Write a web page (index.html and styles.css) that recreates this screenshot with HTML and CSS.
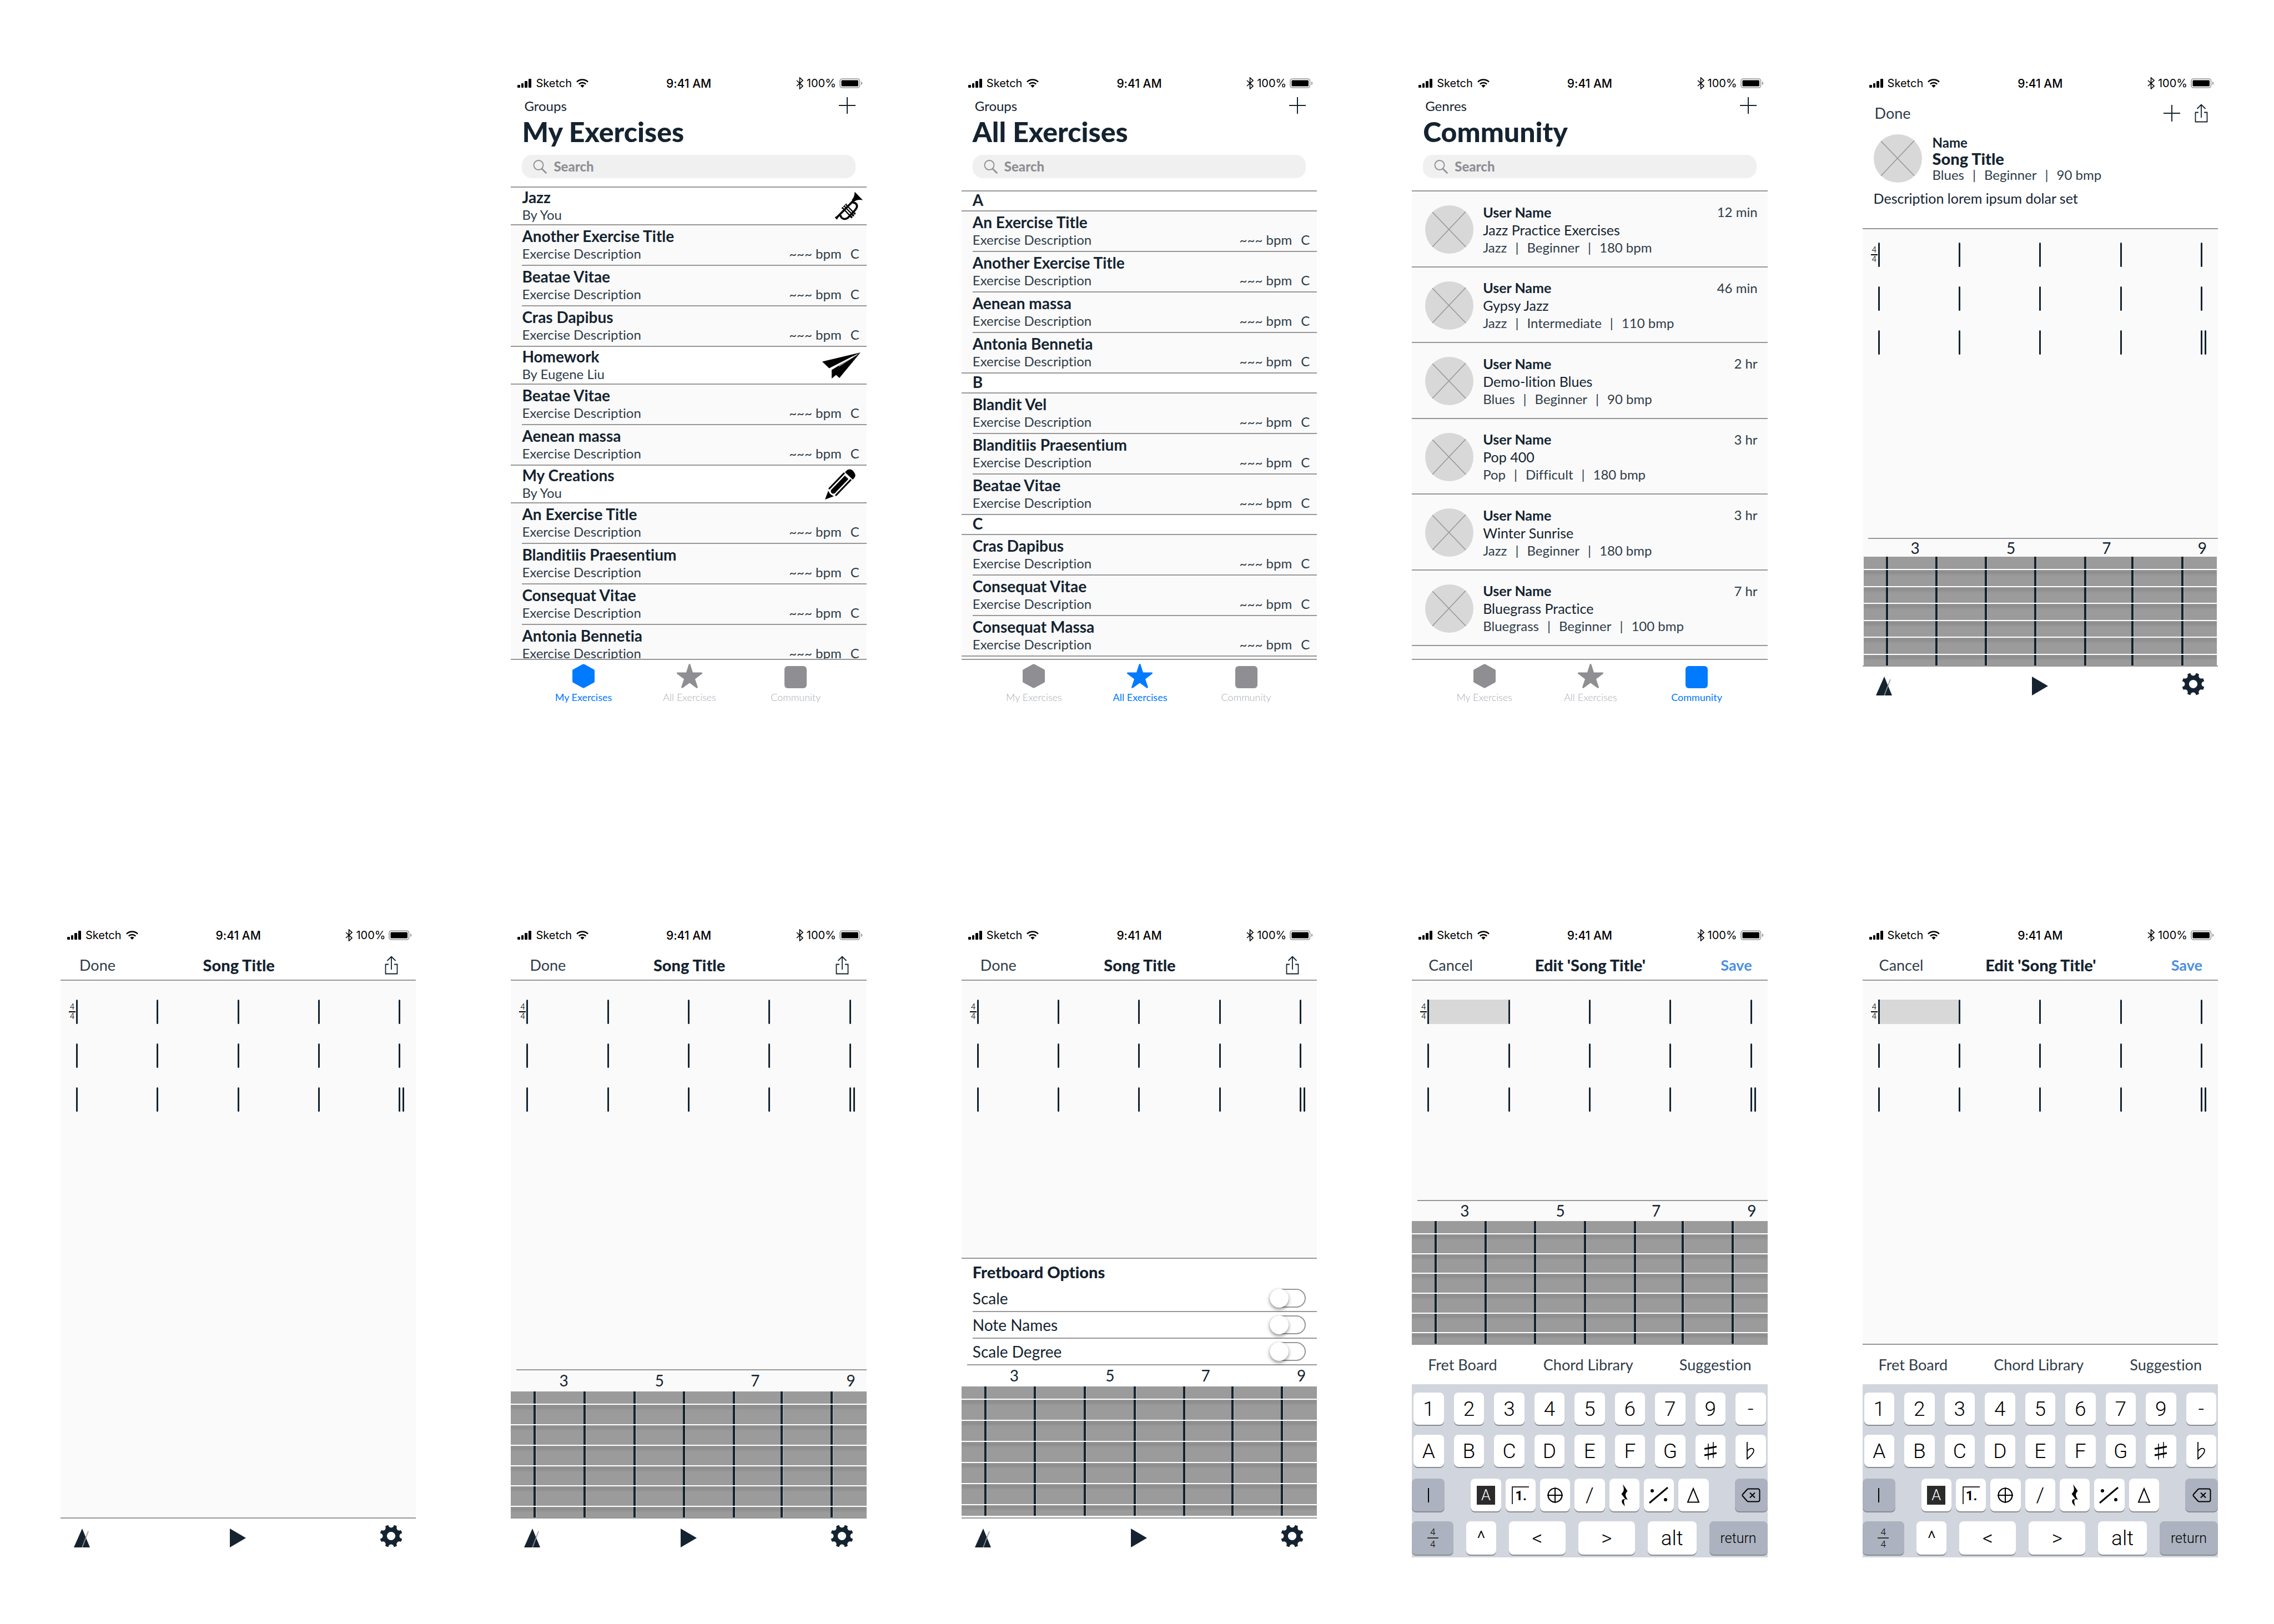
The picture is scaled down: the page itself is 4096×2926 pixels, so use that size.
FILE: index.html
```html
<!DOCTYPE html>
<html lang="en">
<head>
<meta charset="utf-8">
<meta name="viewport" content="width=device-width, initial-scale=1">
<title>Exercise app screens</title>
<link rel="stylesheet" href="styles.css">
</head>
<body>
<svg class="sprite" aria-hidden="true">
  <symbol id="signal" viewBox="0 0 25 16"><rect x="0" y="11" width="5" height="5" rx="1"/><rect x="7" y="8" width="4" height="8" rx="1"/><rect x="13" y="4" width="5" height="12" rx="1"/><rect x="20" y="0" width="5" height="16" rx="1"/></symbol>
  <symbol id="wifi" viewBox="0 0 22 16"><g fill="none" stroke="currentColor" stroke-width="2.6"><path d="M1 5.6a14.2 14.2 0 0 1 20 0"/><path d="M4.8 9.6a8.8 8.8 0 0 1 12.4 0"/></g><path d="M11 16l-3.6-3.7a5.2 5.2 0 0 1 7.2 0z"/></symbol>
  <symbol id="bluetooth" viewBox="0 0 13 22"><path d="M1 6l11 10-5.500 5V1L12 6 1 16" fill="none" stroke="currentColor" stroke-width="1.600"/></symbol>
  <symbol id="battery" viewBox="0 0 42 18"><rect x="1" y="1" width="35.500" height="16" rx="4" fill="none" stroke="#979797" stroke-width="1.600"/><rect x="3.500" y="3.500" width="30.500" height="11" rx="1.500"/><path d="M39 6v6c3-1 3-5 0-6z" fill="#979797"/></symbol>
  <symbol id="plus" viewBox="0 0 30 30"><path d="M15 0v30M0 15h30" fill="none" stroke="currentColor" stroke-width="2"/></symbol>
  <symbol id="share" viewBox="0 0 24 34"><path d="M7 15.500H1.500V32.500H22.500V15.500H17M12 25V1.500M4.500 9L12 1.500 19.500 9" fill="none" stroke="currentColor" stroke-width="1.800"/></symbol>
  <symbol id="search" viewBox="0 0 25 25"><circle cx="10" cy="9.500" r="8.500" fill="none" stroke="currentColor" stroke-width="1.800"/><path d="M16 16l7.500 7.500" stroke="currentColor" stroke-width="2.600" stroke-linecap="round"/></symbol>
  <symbol id="trumpet" viewBox="92 48 176 182"><path d="M217 49L268 102C246 98 228 100 215 112L198 101C212 88 216 70 217 49Z"/><g fill="none" stroke="currentColor"><path d="M101 215L210 105" stroke-width="13"/><path d="M94 209L107 222" stroke-width="9"/><path d="M205 119C226 117 236 134 229 151C222 166 192 195 177 211C160 228 131 225 127 198" stroke-width="13"/><path d="M139 151l62 64M150 140l62 64M161 130l60 62" stroke-width="8"/><path d="M134 155l10-9M146 144l9-9M157 133l9-8" stroke-width="5"/><path d="M190 214l12-11M201 203l11-10M211 192l11-10" stroke-width="5"/></g></symbol>
  <symbol id="plane" viewBox="0 0 69 47"><path d="M69 0L0 16.500 12.500 28.500z"/><path d="M69 0L17 31.500V47L25 40.500 31 46z"/><path d="M30 25L63 4" stroke="#fff" stroke-width="1"/><path d="M13 30.500L55 8" stroke="#fff" stroke-width="1.500"/></symbol>
  <symbol id="pencil" viewBox="0 0 55 55"><g stroke="currentColor" fill="none"><path d="M34 8L8 35M46 20L20 47" stroke-width="3.200" stroke-linecap="round"/><path d="M39 15L15 40" stroke-width="9" /><circle cx="15" cy="40" r="2" stroke-width="5"/></g><path d="M36 6C41-1 47-1 51 4S57 13 50 19z"/><path d="M0 55L6 39Q8 46 16 49z"/></symbol>
  <symbol id="hexagon" viewBox="0 0 40 44"><path d="M18.500 .8q1.500-.8 3 0L38.500 10q1.500.8 1.500 2.500v19q0 1.700-1.500 2.500L21.500 43.200q-1.500.8-3 0L1.500 34Q0 33.200 0 31.500v-19Q0 10.800 1.500 10z"/></symbol>
  <symbol id="star" viewBox="0 0 46 44"><path d="M23 0c.9 0 1.300.8 1.600 1.700L29 15.500h15.300c1.800 0 2.300 1.700.9 2.800L33 27.500l4.700 14c.5 1.700-.9 2.900-2.400 1.900L23 34.500l-12.300 8.900c-1.500 1-2.900-.2-2.400-1.900l4.700-14L.8 18.300c-1.400-1.100-.9-2.800.9-2.800H17l4.400-13.800C21.700.8 22.100 0 23 0z"/></symbol>
  <symbol id="square" viewBox="0 0 40 40"><rect width="40" height="40" rx="6"/></symbol>
  <symbol id="avatar" viewBox="0 0 100 100"><circle cx="50" cy="50" r="50" fill="#d8d8d8"/><path d="M15 14L84 86M84 13L15 86" stroke="#979797" stroke-width="1.800"/></symbol>
  <symbol id="metronome" viewBox="0 0 30 34"><path d="M15 0L29 34H0z"/><path d="M26 5L15 34" stroke="#979797" stroke-width="1.600"/></symbol>
  <symbol id="play" viewBox="0 0 30 34"><path d="M0 0L29 17 0 34z"/></symbol>
  <symbol id="gear" viewBox="-20.500 -20.500 41 41"><circle r="20.500"/><g fill="#fff"><circle r="7.600"/><circle cy="-20" r="5"/><circle cy="20" r="5"/><circle cx="-20" r="5"/><circle cx="20" r="5"/><circle cx="14.800" cy="14.800" r="5"/><circle cx="-14.800" cy="14.800" r="5"/><circle cx="14.800" cy="-14.800" r="5"/><circle cx="-14.800" cy="-14.800" r="5"/></g></symbol>
  <symbol id="sharp" viewBox="0 0 24 32"><path d="M8 3v29M17 0v29" stroke="currentColor" stroke-width="1.500"/><path d="M1 12.500l22-4M1 24l22-4" stroke="currentColor" stroke-width="3"/></symbol>
  <symbol id="flat" viewBox="0 0 16 32"><path d="M2 0v30.500C9 25 14 20 14 15.500 14 10 6 10 2 17" fill="none" stroke="currentColor" stroke-width="1.800"/></symbol>
  <symbol id="coda" viewBox="0 0 30 30"><circle cx="15" cy="15" r="12.500" fill="none" stroke="currentColor" stroke-width="2.200"/><path d="M15 1v28M1 15h28" stroke="currentColor" stroke-width="2"/></symbol>
  <symbol id="rest" viewBox="0 0 14 40"><path d="M4 0L12.500 12.500C7.500 17.500 8 21 13 28C6 25.500 4.500 29 8 39.500C-.5 33 1 26 8.500 27L1.500 17.500C7 13 6.500 9 4 0z"/></symbol>
  <symbol id="repeat" viewBox="0 0 36 30"><path d="M1 29L34 1" stroke="currentColor" stroke-width="3"/><circle cx="6" cy="7" r="3"/><circle cx="30" cy="23" r="3"/></symbol>
  <symbol id="delta" viewBox="0 0 24 28"><path d="M12 2L2 26.500H22z" fill="none" stroke="currentColor" stroke-width="2"/></symbol>
  <symbol id="backspace" viewBox="0 0 34 26"><path d="M12.500 1.500H29q3.500 0 3.500 3.500V21q0 3.500-3.500 3.500H12.500q-1.500 0-2.500-1L2 14.500q-1.200-1.500 0-3L10 2.500q1-1 2.500-1z" fill="none" stroke="currentColor" stroke-width="2"/><path d="M15 8.500l9 9M24 8.500l-9 9" stroke="currentColor" stroke-width="2"/></symbol>
</svg>

<main class="board">

<section class="phone phone--first" aria-label="My Exercises">
  <div class="status"><span class="status-side"><svg class="i-signal"><use href="#signal"/></svg>Sketch<svg class="i-wifi"><use href="#wifi"/></svg></span><time>9:41 AM</time><span class="status-side status-side--end"><svg class="i-bluetooth"><use href="#bluetooth"/></svg>100%<svg class="i-battery"><use href="#battery"/></svg></span></div>
  <header class="browse-head">
    <div class="browse-nav"><a href="#groups">Groups</a><button type="button" aria-label="Add"><svg class="i-plus"><use href="#plus"/></svg></button></div>
    <h1>My Exercises</h1>
    <label class="search"><svg class="i-search"><use href="#search"/></svg><input type="search" placeholder="Search" aria-label="Search"></label>
  </header>
  <div class="list">
    <header class="group-head"><div><h2>Jazz</h2><p>By You</p></div><svg class="i-trumpet"><use href="#trumpet"/></svg></header>
    <ul>
      <li class="item"><h3>Another Exercise Title</h3><p>Exercise Description</p><p class="tempo"><span>~~~ bpm</span><span>C</span></p></li>
      <li class="item"><h3>Beatae Vitae</h3><p>Exercise Description</p><p class="tempo"><span>~~~ bpm</span><span>C</span></p></li>
      <li class="item"><h3>Cras Dapibus</h3><p>Exercise Description</p><p class="tempo"><span>~~~ bpm</span><span>C</span></p></li>
    </ul>
    <header class="group-head"><div><h2>Homework</h2><p>By Eugene Liu</p></div><svg class="i-plane"><use href="#plane"/></svg></header>
    <ul>
      <li class="item"><h3>Beatae Vitae</h3><p>Exercise Description</p><p class="tempo"><span>~~~ bpm</span><span>C</span></p></li>
      <li class="item"><h3>Aenean massa</h3><p>Exercise Description</p><p class="tempo"><span>~~~ bpm</span><span>C</span></p></li>
    </ul>
    <header class="group-head"><div><h2>My Creations</h2><p>By You</p></div><svg class="i-pencil"><use href="#pencil"/></svg></header>
    <ul>
      <li class="item"><h3>An Exercise Title</h3><p>Exercise Description</p><p class="tempo"><span>~~~ bpm</span><span>C</span></p></li>
      <li class="item"><h3>Blanditiis Praesentium</h3><p>Exercise Description</p><p class="tempo"><span>~~~ bpm</span><span>C</span></p></li>
      <li class="item"><h3>Consequat Vitae</h3><p>Exercise Description</p><p class="tempo"><span>~~~ bpm</span><span>C</span></p></li>
      <li class="item"><h3>Antonia Bennetia</h3><p>Exercise Description</p><p class="tempo"><span>~~~ bpm</span><span>C</span></p></li>
    </ul>
  </div>
  <nav class="tabs"><a class="tab tab--on" href="#mine"><svg class="i-hexagon"><use href="#hexagon"/></svg>My Exercises</a><a class="tab" href="#all"><svg class="i-star"><use href="#star"/></svg>All Exercises</a><a class="tab" href="#community"><svg class="i-square"><use href="#square"/></svg>Community</a></nav>
</section>

<section class="phone" aria-label="All Exercises">
  <div class="status"><span class="status-side"><svg class="i-signal"><use href="#signal"/></svg>Sketch<svg class="i-wifi"><use href="#wifi"/></svg></span><time>9:41 AM</time><span class="status-side status-side--end"><svg class="i-bluetooth"><use href="#bluetooth"/></svg>100%<svg class="i-battery"><use href="#battery"/></svg></span></div>
  <header class="browse-head browse-head--tall">
    <div class="browse-nav"><a href="#groups">Groups</a><button type="button" aria-label="Add"><svg class="i-plus"><use href="#plus"/></svg></button></div>
    <h1>All Exercises</h1>
    <label class="search"><svg class="i-search"><use href="#search"/></svg><input type="search" placeholder="Search" aria-label="Search"></label>
  </header>
  <div class="list">
    <h2 class="letter">A</h2>
    <ul>
      <li class="item"><h3>An Exercise Title</h3><p>Exercise Description</p><p class="tempo"><span>~~~ bpm</span><span>C</span></p></li>
      <li class="item"><h3>Another Exercise Title</h3><p>Exercise Description</p><p class="tempo"><span>~~~ bpm</span><span>C</span></p></li>
      <li class="item"><h3>Aenean massa</h3><p>Exercise Description</p><p class="tempo"><span>~~~ bpm</span><span>C</span></p></li>
      <li class="item"><h3>Antonia Bennetia</h3><p>Exercise Description</p><p class="tempo"><span>~~~ bpm</span><span>C</span></p></li>
    </ul>
    <h2 class="letter">B</h2>
    <ul>
      <li class="item"><h3>Blandit Vel</h3><p>Exercise Description</p><p class="tempo"><span>~~~ bpm</span><span>C</span></p></li>
      <li class="item"><h3>Blanditiis Praesentium</h3><p>Exercise Description</p><p class="tempo"><span>~~~ bpm</span><span>C</span></p></li>
      <li class="item"><h3>Beatae Vitae</h3><p>Exercise Description</p><p class="tempo"><span>~~~ bpm</span><span>C</span></p></li>
    </ul>
    <h2 class="letter">C</h2>
    <ul class="closed">
      <li class="item"><h3>Cras Dapibus</h3><p>Exercise Description</p><p class="tempo"><span>~~~ bpm</span><span>C</span></p></li>
      <li class="item"><h3>Consequat Vitae</h3><p>Exercise Description</p><p class="tempo"><span>~~~ bpm</span><span>C</span></p></li>
      <li class="item"><h3>Consequat Massa</h3><p>Exercise Description</p><p class="tempo"><span>~~~ bpm</span><span>C</span></p></li>
    </ul>
  </div>
  <nav class="tabs"><a class="tab" href="#mine"><svg class="i-hexagon"><use href="#hexagon"/></svg>My Exercises</a><a class="tab tab--on" href="#all"><svg class="i-star"><use href="#star"/></svg>All Exercises</a><a class="tab" href="#community"><svg class="i-square"><use href="#square"/></svg>Community</a></nav>
</section>

<section class="phone" aria-label="Community">
  <div class="status"><span class="status-side"><svg class="i-signal"><use href="#signal"/></svg>Sketch<svg class="i-wifi"><use href="#wifi"/></svg></span><time>9:41 AM</time><span class="status-side status-side--end"><svg class="i-bluetooth"><use href="#bluetooth"/></svg>100%<svg class="i-battery"><use href="#battery"/></svg></span></div>
  <header class="browse-head browse-head--tall">
    <div class="browse-nav"><a href="#genres">Genres</a><button type="button" aria-label="Add"><svg class="i-plus"><use href="#plus"/></svg></button></div>
    <h1>Community</h1>
    <label class="search"><svg class="i-search"><use href="#search"/></svg><input type="search" placeholder="Search" aria-label="Search"></label>
  </header>
  <div class="list list--feed">
    <ul class="feed">
      <li class="post"><svg class="i-avatar"><use href="#avatar"/></svg><div><h3>User Name</h3><p class="song">Jazz Practice Exercises</p><p class="meta"><span>Jazz</span><span>|</span><span>Beginner</span><span>|</span><span>180 bpm</span></p></div><time>12 min</time></li>
      <li class="post"><svg class="i-avatar"><use href="#avatar"/></svg><div><h3>User Name</h3><p class="song">Gypsy Jazz</p><p class="meta"><span>Jazz</span><span>|</span><span>Intermediate</span><span>|</span><span>110 bmp</span></p></div><time>46 min</time></li>
      <li class="post"><svg class="i-avatar"><use href="#avatar"/></svg><div><h3>User Name</h3><p class="song">Demo-lition Blues</p><p class="meta"><span>Blues</span><span>|</span><span>Beginner</span><span>|</span><span>90 bmp</span></p></div><time>2 hr</time></li>
      <li class="post"><svg class="i-avatar"><use href="#avatar"/></svg><div><h3>User Name</h3><p class="song">Pop 400</p><p class="meta"><span>Pop</span><span>|</span><span>Difficult</span><span>|</span><span>180 bmp</span></p></div><time>3 hr</time></li>
      <li class="post"><svg class="i-avatar"><use href="#avatar"/></svg><div><h3>User Name</h3><p class="song">Winter Sunrise</p><p class="meta"><span>Jazz</span><span>|</span><span>Beginner</span><span>|</span><span>180 bmp</span></p></div><time>3 hr</time></li>
      <li class="post"><svg class="i-avatar"><use href="#avatar"/></svg><div><h3>User Name</h3><p class="song">Bluegrass Practice</p><p class="meta"><span>Bluegrass</span><span>|</span><span>Beginner</span><span>|</span><span>100 bmp</span></p></div><time>7 hr</time></li>
    </ul>
  </div>
  <nav class="tabs"><a class="tab" href="#mine"><svg class="i-hexagon"><use href="#hexagon"/></svg>My Exercises</a><a class="tab" href="#all"><svg class="i-star"><use href="#star"/></svg>All Exercises</a><a class="tab tab--on" href="#community"><svg class="i-square"><use href="#square"/></svg>Community</a></nav>
</section>

<section class="phone" aria-label="Song details">
  <div class="status"><span class="status-side"><svg class="i-signal"><use href="#signal"/></svg>Sketch<svg class="i-wifi"><use href="#wifi"/></svg></span><time>9:41 AM</time><span class="status-side status-side--end"><svg class="i-bluetooth"><use href="#bluetooth"/></svg>100%<svg class="i-battery"><use href="#battery"/></svg></span></div>
  <header class="nav nav--plain"><button type="button">Done</button><span></span><span class="nav-end"><button type="button" aria-label="Add"><svg class="i-plus"><use href="#plus"/></svg></button><button type="button" aria-label="Share"><svg class="i-share"><use href="#share"/></svg></button></span></header>
  <div class="profile">
    <svg class="i-avatar"><use href="#avatar"/></svg>
    <div class="profile-text"><p class="author">Name</p><h2>Song Title</h2><p class="meta"><span>Blues</span><span>|</span><span>Beginner</span><span>|</span><span>90 bmp</span></p></div>
    <p class="description">Description lorem ipsum dolar set</p>
  </div>
  <div class="score score--detail">
    <div class="staff"><span class="meter"><b>4</b><b>4</b></span><i></i><i></i><i></i><i></i><i></i></div>
    <div class="staff"><span></span><i></i><i></i><i></i><i></i><i></i></div>
    <div class="staff staff--end"><span></span><i></i><i></i><i></i><i></i><i></i></div>
  </div>
  <div class="fretboard fretboard--short">
    <div class="fret-numbers"><span>3</span><span>5</span><span>7</span><span>9</span></div>
    <div class="neck"><i></i><i></i><i></i><i></i><i></i><i></i><i></i><div class="strings"><b></b><b></b><b></b><b></b><b></b><b></b></div></div>
  </div>
  <footer class="toolbar"><button type="button" aria-label="Metronome"><svg class="i-play"><use href="#metronome"/></svg></button><button type="button" aria-label="Play"><svg class="i-play"><use href="#play"/></svg></button><button type="button" aria-label="Settings"><svg class="i-gear"><use href="#gear"/></svg></button></footer>
</section>

<section class="phone" aria-label="Song">
  <div class="status"><span class="status-side"><svg class="i-signal"><use href="#signal"/></svg>Sketch<svg class="i-wifi"><use href="#wifi"/></svg></span><time>9:41 AM</time><span class="status-side status-side--end"><svg class="i-bluetooth"><use href="#bluetooth"/></svg>100%<svg class="i-battery"><use href="#battery"/></svg></span></div>
  <header class="nav"><button type="button">Done</button><h1>Song Title</h1><span class="nav-end"><button type="button" aria-label="Share"><svg class="i-share"><use href="#share"/></svg></button></span></header>
  <div class="score">
    <div class="staff"><span class="meter"><b>4</b><b>4</b></span><i></i><i></i><i></i><i></i><i></i></div>
    <div class="staff"><span></span><i></i><i></i><i></i><i></i><i></i></div>
    <div class="staff staff--end"><span></span><i></i><i></i><i></i><i></i><i></i></div>
  </div>
  <footer class="toolbar"><button type="button" aria-label="Metronome"><svg class="i-play"><use href="#metronome"/></svg></button><button type="button" aria-label="Play"><svg class="i-play"><use href="#play"/></svg></button><button type="button" aria-label="Settings"><svg class="i-gear"><use href="#gear"/></svg></button></footer>
</section>

<section class="phone" aria-label="Song with fretboard">
  <div class="status"><span class="status-side"><svg class="i-signal"><use href="#signal"/></svg>Sketch<svg class="i-wifi"><use href="#wifi"/></svg></span><time>9:41 AM</time><span class="status-side status-side--end"><svg class="i-bluetooth"><use href="#bluetooth"/></svg>100%<svg class="i-battery"><use href="#battery"/></svg></span></div>
  <header class="nav"><button type="button">Done</button><h1>Song Title</h1><span class="nav-end"><button type="button" aria-label="Share"><svg class="i-share"><use href="#share"/></svg></button></span></header>
  <div class="score">
    <div class="staff"><span class="meter"><b>4</b><b>4</b></span><i></i><i></i><i></i><i></i><i></i></div>
    <div class="staff"><span></span><i></i><i></i><i></i><i></i><i></i></div>
    <div class="staff staff--end"><span></span><i></i><i></i><i></i><i></i><i></i></div>
  </div>
  <div class="fretboard">
    <div class="fret-numbers"><span>3</span><span>5</span><span>7</span><span>9</span></div>
    <div class="neck"><i></i><i></i><i></i><i></i><i></i><i></i><i></i><div class="strings"><b></b><b></b><b></b><b></b><b></b><b></b></div></div>
  </div>
  <footer class="toolbar"><button type="button" aria-label="Metronome"><svg class="i-play"><use href="#metronome"/></svg></button><button type="button" aria-label="Play"><svg class="i-play"><use href="#play"/></svg></button><button type="button" aria-label="Settings"><svg class="i-gear"><use href="#gear"/></svg></button></footer>
</section>

<section class="phone" aria-label="Fretboard options">
  <div class="status"><span class="status-side"><svg class="i-signal"><use href="#signal"/></svg>Sketch<svg class="i-wifi"><use href="#wifi"/></svg></span><time>9:41 AM</time><span class="status-side status-side--end"><svg class="i-bluetooth"><use href="#bluetooth"/></svg>100%<svg class="i-battery"><use href="#battery"/></svg></span></div>
  <header class="nav"><button type="button">Done</button><h1>Song Title</h1><span class="nav-end"><button type="button" aria-label="Share"><svg class="i-share"><use href="#share"/></svg></button></span></header>
  <div class="score">
    <div class="staff"><span class="meter"><b>4</b><b>4</b></span><i></i><i></i><i></i><i></i><i></i></div>
    <div class="staff"><span></span><i></i><i></i><i></i><i></i><i></i></div>
    <div class="staff staff--end"><span></span><i></i><i></i><i></i><i></i><i></i></div>
  </div>
  <div class="options">
    <h2>Fretboard Options</h2>
    <label class="option">Scale<input type="checkbox" role="switch"></label>
    <label class="option">Note Names<input type="checkbox" role="switch"></label>
    <label class="option">Scale Degree<input type="checkbox" role="switch"></label>
  </div>
  <div class="fretboard fretboard--tall">
    <div class="fret-numbers"><span>3</span><span>5</span><span>7</span><span>9</span></div>
    <div class="neck"><i></i><i></i><i></i><i></i><i></i><i></i><i></i><div class="strings"><b></b><b></b><b></b><b></b><b></b><b></b></div></div>
  </div>
  <footer class="toolbar"><button type="button" aria-label="Metronome"><svg class="i-play"><use href="#metronome"/></svg></button><button type="button" aria-label="Play"><svg class="i-play"><use href="#play"/></svg></button><button type="button" aria-label="Settings"><svg class="i-gear"><use href="#gear"/></svg></button></footer>
</section>

<section class="phone" aria-label="Edit with fretboard">
  <div class="status"><span class="status-side"><svg class="i-signal"><use href="#signal"/></svg>Sketch<svg class="i-wifi"><use href="#wifi"/></svg></span><time>9:41 AM</time><span class="status-side status-side--end"><svg class="i-bluetooth"><use href="#bluetooth"/></svg>100%<svg class="i-battery"><use href="#battery"/></svg></span></div>
  <header class="nav nav--edit"><button type="button">Cancel</button><h1>Edit 'Song Title'</h1><span class="nav-end"><button type="button" class="save">Save</button></span></header>
  <div class="score">
    <div class="staff staff--selected"><span class="meter"><b>4</b><b>4</b></span><i></i><i></i><i></i><i></i><i></i></div>
    <div class="staff"><span></span><i></i><i></i><i></i><i></i><i></i></div>
    <div class="staff staff--end"><span></span><i></i><i></i><i></i><i></i><i></i></div>
  </div>
  <div class="fretboard fretboard--edit">
    <div class="fret-numbers"><span>3</span><span>5</span><span>7</span><span>9</span></div>
    <div class="neck"><i></i><i></i><i></i><i></i><i></i><i></i><i></i><div class="strings"><b></b><b></b><b></b><b></b><b></b><b></b></div></div>
  </div>
  <div class="modes"><button type="button">Fret Board</button><button type="button">Chord Library</button><button type="button">Suggestion</button></div>
  <div class="keyboard">
    <div class="keys"><button type="button">1</button><button type="button">2</button><button type="button">3</button><button type="button">4</button><button type="button">5</button><button type="button">6</button><button type="button">7</button><button type="button">9</button><button type="button">-</button></div>
    <div class="keys"><button type="button">A</button><button type="button">B</button><button type="button">C</button><button type="button">D</button><button type="button">E</button><button type="button">F</button><button type="button">G</button><button type="button" aria-label="Sharp"><svg class="k-sharp"><use href="#sharp"/></svg></button><button type="button" aria-label="Flat"><svg class="k-flat"><use href="#flat"/></svg></button></div>
    <div class="keys keys--symbols"><button type="button" class="dark" aria-label="Bar line"><span class="k-bar"></span></button><div class="keys-mid"><button type="button"><span class="k-section">A</span></button><button type="button"><span class="k-volta">1.</span></button><button type="button" aria-label="Coda"><svg class="k-coda"><use href="#coda"/></svg></button><button type="button">/</button><button type="button" aria-label="Rest"><svg class="k-rest"><use href="#rest"/></svg></button><button type="button" aria-label="Repeat"><svg class="k-repeat"><use href="#repeat"/></svg></button><button type="button" aria-label="Major seventh"><svg class="k-delta"><use href="#delta"/></svg></button></div><button type="button" class="dark" aria-label="Delete"><svg class="k-backspace"><use href="#backspace"/></svg></button></div>
    <div class="keys keys--bottom"><button type="button" class="dark"><span class="k-meter"><b>4</b><b>4</b></span></button><button type="button" class="caret">^</button><button type="button">&lt;</button><button type="button">&gt;</button><button type="button">alt</button><button type="button" class="dark">return</button></div>
  </div>
</section>

<section class="phone" aria-label="Edit">
  <div class="status"><span class="status-side"><svg class="i-signal"><use href="#signal"/></svg>Sketch<svg class="i-wifi"><use href="#wifi"/></svg></span><time>9:41 AM</time><span class="status-side status-side--end"><svg class="i-bluetooth"><use href="#bluetooth"/></svg>100%<svg class="i-battery"><use href="#battery"/></svg></span></div>
  <header class="nav nav--edit"><button type="button">Cancel</button><h1>Edit 'Song Title'</h1><span class="nav-end"><button type="button" class="save">Save</button></span></header>
  <div class="score">
    <div class="staff staff--selected"><span class="meter"><b>4</b><b>4</b></span><i></i><i></i><i></i><i></i><i></i></div>
    <div class="staff"><span></span><i></i><i></i><i></i><i></i><i></i></div>
    <div class="staff staff--end"><span></span><i></i><i></i><i></i><i></i><i></i></div>
  </div>
  <div class="modes"><button type="button">Fret Board</button><button type="button">Chord Library</button><button type="button">Suggestion</button></div>
  <div class="keyboard">
    <div class="keys"><button type="button">1</button><button type="button">2</button><button type="button">3</button><button type="button">4</button><button type="button">5</button><button type="button">6</button><button type="button">7</button><button type="button">9</button><button type="button">-</button></div>
    <div class="keys"><button type="button">A</button><button type="button">B</button><button type="button">C</button><button type="button">D</button><button type="button">E</button><button type="button">F</button><button type="button">G</button><button type="button" aria-label="Sharp"><svg class="k-sharp"><use href="#sharp"/></svg></button><button type="button" aria-label="Flat"><svg class="k-flat"><use href="#flat"/></svg></button></div>
    <div class="keys keys--symbols"><button type="button" class="dark" aria-label="Bar line"><span class="k-bar"></span></button><div class="keys-mid"><button type="button"><span class="k-section">A</span></button><button type="button"><span class="k-volta">1.</span></button><button type="button" aria-label="Coda"><svg class="k-coda"><use href="#coda"/></svg></button><button type="button">/</button><button type="button" aria-label="Rest"><svg class="k-rest"><use href="#rest"/></svg></button><button type="button" aria-label="Repeat"><svg class="k-repeat"><use href="#repeat"/></svg></button><button type="button" aria-label="Major seventh"><svg class="k-delta"><use href="#delta"/></svg></button></div><button type="button" class="dark" aria-label="Delete"><svg class="k-backspace"><use href="#backspace"/></svg></button></div>
    <div class="keys keys--bottom"><button type="button" class="dark"><span class="k-meter"><b>4</b><b>4</b></span></button><button type="button" class="caret">^</button><button type="button">&lt;</button><button type="button">&gt;</button><button type="button">alt</button><button type="button" class="dark">return</button></div>
  </div>
</section>

</main>
</body>
</html>
```
FILE: styles.css
```css
:root {
  --ink: #14232f;
  --ink-soft: #2f3c48;
  --rule: #979797;
  --panel: #fafafa;
  --muted: #8e8e93;
  --blue: #007aff;
}

* { box-sizing: border-box; }

body {
  margin: 0;
  background: #fff;
  color: var(--ink);
  font-family: Lato, "Open Sans", sans-serif;
  font-size: 24px;
  font-variant-ligatures: none;
}

h1, h2, h3, p, ul { margin: 0; padding: 0; }
ul { list-style: none; }
a { color: inherit; text-decoration: none; }
button {
  display: block;
  margin: 0;
  padding: 0;
  border: 0;
  background: none;
  color: inherit;
  font: inherit;
}
svg { display: block; flex: none; fill: currentColor; }
.sprite { position: absolute; width: 0; height: 0; }

/* artboards */
.board {
  display: grid;
  grid-template-columns: repeat(5, 1fr);
  gap: 396px 171px;
  padding: 132px 101px 118px 109px;
}
.phone {
  display: flex;
  flex-direction: column;
  aspect-ratio: 375 / 667;
  overflow: hidden;
}
.phone--first { grid-column: 2; }

/* status bar */
.status {
  display: grid;
  grid-template-columns: 1fr auto 1fr;
  align-items: center;
  flex: none;
  height: 36px;
  padding: 0 7px;
  color: #000;
  font-family: Inter, "Liberation Sans", sans-serif;
  font-size: 20px;
}
.status time { font-size: 21px; font-weight: 500; }
.status-side { display: flex; align-items: center; gap: 8px; padding-left: 5px; }
.status-side--end { justify-content: flex-end; gap: 6px; padding-left: 0; }
.i-signal { width: 25px; height: 16px; }
.i-wifi { width: 22px; height: 16px; }
.i-bluetooth { width: 13px; height: 22px; }
.i-battery { width: 42px; height: 18px; }

/* list screens: heading and search */
.browse-head { flex: none; padding: 0 20px 15px; }
.browse-head--tall { padding-bottom: 22px; }
.browse-nav {
  display: flex;
  align-items: center;
  justify-content: space-between;
  height: 44px;
  padding-left: 4px;
}
.i-plus { width: 30px; height: 30px; }
.browse-head h1 { font-size: 50px; font-weight: 900; line-height: 50px; }
.search {
  display: flex;
  align-items: center;
  gap: 12px;
  height: 42px;
  margin-top: 17px;
  padding: 0 20px;
  border-radius: 18px;
  background: #f0f0f0;
  color: var(--muted);
}
.i-search { width: 25px; height: 25px; }
.search input {
  flex: 1;
  min-width: 0;
  padding: 0;
  border: 0;
  outline: 0;
  background: none;
  color: var(--ink);
  font: 900 24px/32px Lato, sans-serif;
  appearance: none;
}
.search input::placeholder { color: var(--muted); opacity: 1; }

/* exercise lists */
.list { flex: 1; min-height: 0; overflow: hidden; background: var(--panel); }
.group-head {
  display: flex;
  justify-content: space-between;
  align-items: center;
  height: 70px;
  padding: 0 7px 0 20px;
  border: solid var(--rule);
  border-width: 2px 0;
  background: #fff;
}
.group-head svg { color: #000; }
.group-head h2, .item h3 { font-size: 28px; font-weight: 700; line-height: 30px; }
.group-head p, .item p { color: var(--ink-soft); line-height: 32px; margin-top: 1px; }
.i-trumpet { width: 50px; height: 52px; }
.i-plane { width: 69px; height: 47px; margin-right: 4px; }
.i-pencil { width: 55px; height: 55px; margin-right: 13px; }
.item {
  display: grid;
  grid-template-columns: 1fr auto;
  margin-left: 20px;
  padding: 4px 13px 4px 0;
}
.item + .item { border-top: 2px solid var(--rule); }
.item h3 { grid-column: 1 / -1; }
.tempo { display: flex; gap: 16px; }
.letter {
  height: 38px;
  padding-left: 20px;
  border: solid var(--rule);
  border-width: 2px 0;
  background: #fff;
  font-size: 28px;
  font-weight: 700;
  line-height: 30px;
}
.closed { border-bottom: 2px solid var(--rule); }

/* tab bar */
.tabs {
  display: grid;
  grid-template-columns: repeat(3, 1fr);
  flex: none;
  height: 84px;
  padding: 7px 32px 0 35px;
  border-top: 2px solid var(--rule);
}
.tab {
  display: grid;
  grid-template-rows: 44px 20px;
  row-gap: 6px;
  justify-items: center;
  align-items: end;
  color: #a9adb5;
  font-size: 18px;
  font-weight: 300;
  line-height: 20px;
}
.tab svg { color: var(--muted); }
.tab--on, .tab--on svg { color: var(--blue); font-weight: 400; }
.i-hexagon { width: 40px; height: 44px; }
.i-star { width: 46px; height: 44px; }
.i-square { width: 40px; height: 40px; }

/* community feed */
.list--feed { display: flex; flex-direction: column; padding-bottom: 23px; }
.feed { display: flex; flex-direction: column; flex: 1; border-bottom: 2px solid var(--rule); }
.post {
  display: grid;
  grid-template-columns: auto 1fr auto;
  column-gap: 17px;
  align-items: center;
  flex: 1;
  padding: 3px 18px 0 24px;
  border-top: 2px solid var(--rule);
  line-height: 32px;
}
.post h3, .post .song { font-size: 25px; }
.post h3 { font-weight: 700; }
.post time { align-self: start; margin-top: 18px; color: var(--ink-soft); }
.i-avatar { width: 87px; height: 87px; }
.meta { display: flex; gap: 15px; color: var(--ink-soft); }

/* song header */
.nav {
  display: grid;
  grid-template-columns: 1fr auto 1fr;
  align-items: center;
  flex: none;
  height: 64px;
  padding: 9px 32px 0 34px;
  border-bottom: 2px solid var(--rule);
  color: var(--ink-soft);
  font-size: 27px;
}
.nav--edit { padding: 9px 28px 0 30px; }
.nav--plain { padding: 9px 18px 0 22px; border-bottom-color: transparent; }
.nav button { justify-self: start; }
.nav h1 { color: var(--ink); font-size: 29px; font-weight: 900; }
.nav svg { color: var(--ink); }
.nav-end { display: flex; justify-content: flex-end; align-items: center; gap: 26px; }
.i-share { width: 24px; height: 34px; }
.nav .save { color: #4a90e2; font-weight: 700; }
.profile {
  display: grid;
  grid-template-columns: auto 1fr;
  column-gap: 19px;
  padding: 10px 20px 38px;
  line-height: 29px;
}
.author { font-weight: 700; }
.profile h2 { font-size: 29px; font-weight: 900; line-height: 29px; }
.description { grid-column: 1 / -1; margin-top: 12px; font-size: 25px; line-height: 32px; }

/* chart */
.score {
  display: flex;
  flex-direction: column;
  gap: 35px;
  flex: 1;
  min-height: 0;
  padding-top: 34px;
  background: var(--panel);
}
.score--detail { padding-top: 24px; border-top: 2px solid var(--rule); }
.staff {
  display: grid;
  grid-template-columns: 28px repeat(4, 1fr) 3px;
  height: 44px;
  margin-right: 28px;
}
.staff i { width: 3px; border-radius: 2px; background: var(--ink); }
.staff--end i:last-child { box-shadow: 7px 0 0 var(--ink); }
.staff--selected i:nth-child(2) { width: auto; border-left: 3px solid var(--ink); border-radius: 0; background: #d8d8d8; }
.meter { align-self: center; width: 12px; margin-left: 15px; }
.meter b, .k-meter b {
  display: block;
  color: #000;
  font-family: Roboto, sans-serif;
  font-size: 15px;
  font-weight: 300;
  line-height: 15px;
  text-align: center;
}
.meter b:first-child, .k-meter b:first-child { border-bottom: 2px solid #000; }

/* fretboard */
.fretboard { flex: none; display: flex; flex-direction: column; height: 267px; background: var(--panel); }
.fretboard--short { height: 230px; }
.fretboard--tall { height: 276px; padding-bottom: 3px; background: #fff; }
.fretboard--edit { height: 259px; }
.fret-numbers {
  display: flex;
  justify-content: space-between;
  height: 40px;
  margin-left: 10px;
  padding: 0 20px 0 77px;
  border-top: 2px solid var(--rule);
  font-size: 28px;
  line-height: 36px;
}
.fretboard--short .fret-numbers { height: 34px; line-height: 32px; }
.fretboard--edit .fret-numbers { height: 38px; line-height: 34px; }
.neck {
  position: relative;
  display: grid;
  grid-template-columns: 7% 14% 14% 14% 14% 13.5% 14% 1fr;
  flex: 1;
  background: #9b9b9b;
}
.fretboard--short .neck { margin: 0 2px; }
.neck i { border-right: 4px solid var(--ink); box-shadow: 1px 0 0 #bdbdbd; }
.strings {
  position: absolute;
  inset: 0;
  display: flex;
  flex-direction: column;
  justify-content: space-between;
  padding: 22px 0 19px;
  overflow: hidden;
}
.strings b { height: 2px; background: #fff; box-shadow: 0 5px 5px 1px rgba(0, 0, 0, .15); }

/* fretboard options */
.options { flex: none; border-top: 2px solid var(--rule); background: #fff; font-size: 28px; }
.options h2 { padding-left: 20px; font-size: 29px; font-weight: 900; line-height: 48px; }
.option {
  display: flex;
  align-items: center;
  justify-content: space-between;
  height: 48px;
  margin-left: 20px;
  padding-right: 20px;
  border-bottom: 2px solid var(--rule);
}
.option:last-child { height: 46px; border-bottom: 0; }
.option input {
  position: relative;
  width: 65px;
  height: 34px;
  margin: 0;
  border: 2px solid var(--rule);
  border-radius: 17px;
  background: #fff;
  appearance: none;
}
.option input::before {
  content: "";
  position: absolute;
  left: -2px;
  top: -2px;
  width: 34px;
  height: 34px;
  border-radius: 50%;
  background: #fff;
  box-shadow: 0 3px 6px rgba(0, 0, 0, .45);
}

/* player toolbar */
.toolbar {
  display: grid;
  grid-template-columns: 1fr auto 1fr;
  align-items: end;
  flex: none;
  height: 72px;
  padding: 0 24px 18px;
  border-top: 2px solid var(--rule);
}
.toolbar button:last-child { justify-self: end; }
.toolbar button:first-child { justify-self: start; }
.i-play { width: 30px; height: 34px; }
.i-gear { width: 41px; height: 41px; }

/* chord keyboard */
.modes {
  display: flex;
  justify-content: space-between;
  align-items: center;
  flex: none;
  height: 73px;
  padding: 0 29px;
  border-top: 2px solid var(--rule);
  color: var(--ink-soft);
  font-size: 27px;
}
.keyboard {
  display: flex;
  flex-direction: column;
  gap: 18px;
  flex: none;
  height: 312px;
  padding-top: 15px;
  background: #d1d5dd;
  color: #000;
  font-family: Roboto, "Liberation Sans", sans-serif;
  font-size: 37px;
  font-weight: 300;
}
.keys {
  display: grid;
  grid-template-columns: repeat(9, 1fr);
  column-gap: 18px;
  height: 58px;
  padding: 0 3px;
}
.keys--symbols { grid-template-columns: 59px 1fr 59px; column-gap: 47px; height: 59px; margin-top: 3px; padding: 0; }
.keys-mid { display: grid; grid-template-columns: repeat(7, 1fr); column-gap: 8px; }
.keys--bottom { display: flex; justify-content: space-between; height: 60px; padding: 0; }
.keys button {
  display: flex;
  align-items: center;
  justify-content: center;
  border-radius: 8px;
  background: #fff;
  box-shadow: 0 2px 0 #898b90;
}
.keys .dark { background: #acb2bf; }
.keys--bottom button { flex: 0 0 102px; }
.keys--bottom button:first-child { flex-basis: 75px; }
.keys--bottom .caret { flex-basis: 54px; }
.keys--bottom button:nth-child(5) { flex-basis: 88px; }
.keys--bottom button:last-child { flex-basis: 105px; font-size: 25px; }
.k-bar { width: 2px; height: 26px; background: #000; }
.k-section { width: 33px; background: #2b2b2b; color: #fff; font-size: 27px; line-height: 34px; }
.k-volta {
  width: 31px;
  border: solid #2b2b2b;
  border-width: 2px 0 0 2px;
  font-size: 24px;
  font-weight: 700;
  line-height: 30px;
}
.k-sharp { width: 24px; height: 32px; }
.k-flat { width: 16px; height: 32px; }
.k-coda { width: 30px; height: 30px; }
.k-rest { width: 14px; height: 40px; }
.k-repeat { width: 36px; height: 30px; }
.k-delta { width: 24px; height: 28px; }
.k-backspace { width: 34px; height: 26px; }
.k-meter { width: 20px; }
.k-meter b { font-size: 17px; line-height: 20px; }
.k-meter b:first-child { border-color: #333; }
```
